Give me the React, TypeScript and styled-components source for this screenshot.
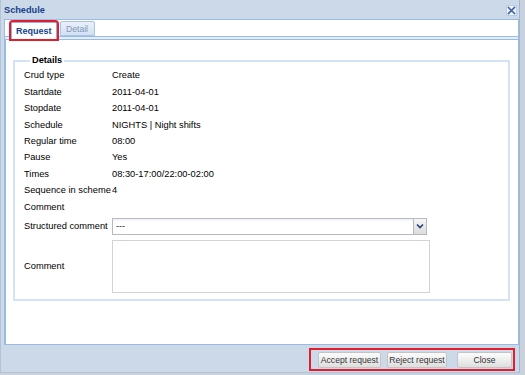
import React from "react";
import styled, { createGlobalStyle } from "styled-components";

const Global = createGlobalStyle`
  html, body { margin: 0; padding: 0; }
  body {
    width: 525px;
    height: 375px;
    overflow: hidden;
    background: #c9d2dc;
    font-family: "Liberation Sans", Arial, sans-serif;
  }
`;

const Win = styled.div`
  width: 520px;
  height: 373px;
  background: #ccd9e8;
  border-left: 1px solid #b4c4d6;
  border-right: 1px solid #9fb7d6;
  border-bottom: 1px solid #b4c4d6;
  display: flex;
  flex-direction: column;
  box-sizing: border-box;
`;

const Header = styled.div`
  height: 19px;
  display: flex;
  align-items: center;
  justify-content: space-between;
  padding: 0 2px 0 3px;
  flex-shrink: 0;
`;

const Title = styled.div`
  font-weight: bold;
  font-size: 9.2px;
  color: #15428b;
`;

const CloseBtn = styled.div`
  width: 11px;
  height: 11px;
  margin-top: 2px;
  background: #eef3fa;
  border: 1px solid #b9cce6;
  box-sizing: border-box;
  display: flex;
  align-items: center;
  justify-content: center;
`;

const Main = styled.div`
  margin: 0 0 0 3px;
  display: flex;
  flex-direction: column;
  width: 515px;
`;

const Strip = styled.div`
  height: 17px;
  background: #fff;
  border: 1px solid #99bbe8;
  border-bottom: none;
  box-sizing: border-box;
  display: flex;
  align-items: flex-end;
  padding-left: 6px;
  gap: 3px;
  position: relative;
  z-index: 1;
`;

const StripSpacer = styled.div`
  height: 3px;
  box-sizing: border-box;
  border-top: 1px solid #99bbe8;
  border-left: 1px solid #99bbe8;
  border-right: 1px solid #99bbe8;
  background: #e4eefc;
`;

const Tab = styled.div<{ $active?: boolean; $marked?: boolean }>`
  height: ${(p) => (p.$active ? "17px" : "15px")};
  margin-bottom: ${(p) => (p.$active ? "-3px" : "0")};
  box-sizing: border-box;
  padding: 0 4px;
  display: flex;
  align-items: center;
  justify-content: center;
  font-size: ${(p) => (p.$active ? "9px" : "8.6px")};
  font-weight: ${(p) => (p.$active ? "bold" : "normal")};
  color: ${(p) => (p.$active ? "#15428b" : "#8196b6")};
  background: ${(p) =>
    p.$active ? "#fff" : "linear-gradient(#e9f0fa, #d3e1f3)"};
  border: 1px solid ${(p) => (p.$active ? "#8db2e3" : "#a9c3e6")};
  border-bottom: ${(p) => (p.$active ? "none" : "1px solid #a9c3e6")};
  border-radius: 2px 2px 0 0;
  outline: ${(p) => (p.$marked ? "2px solid #e31d2a" : "none")};
  min-width: ${(p) => (p.$active ? "44px" : "35px")};
`;

const Body = styled.div`
  height: 306px;
  background: #fff;
  border: 1px solid #99bbe8;
  border-left-width: 2px;
  box-sizing: border-box;
  padding: 15px 8px 0 7px;
`;

const FieldSet = styled.fieldset`
  margin: 0;
  height: 246px;
  box-sizing: border-box;
  border: 2px solid #d3e2f7;
  padding: 0 9px 0 9px;
  width: 497px;
`;

const Legend = styled.legend`
  font-size: 9.2px;
  font-weight: bold;
  color: #000;
  padding: 0 2px;
  margin-left: 6px;
  line-height: 11px;
`;

const Rows = styled.div`
  display: flex;
  flex-direction: column;
  margin-top: 1px;
`;

const Row = styled.div`
  display: flex;
  align-items: center;
  height: 16.45px;
  font-size: 9.3px;
  color: #000;
`;

const Label = styled.div`
  width: 88px;
  flex-shrink: 0;
  white-space: nowrap;
`;

const Value = styled.div`
  white-space: nowrap;
`;

const ComboRow = styled.div`
  display: flex;
  align-items: center;
  margin-top: 3px;
  height: 17px;
  font-size: 9.3px;
  color: #000;
`;

const Combo = styled.div`
  display: flex;
  height: 17px;
  width: 315px;
  box-sizing: border-box;
`;

const ComboInput = styled.div`
  flex: 1;
  border: 1px solid #b5b8c8;
  border-right: none;
  background: linear-gradient(#f0f0f0 0px, #fff 3px);
  font-size: 9px;
  padding-left: 3px;
  display: flex;
  align-items: center;
  color: #222;
`;

const Trigger = styled.div`
  width: 14px;
  border: 1px solid #b5b8c8;
  box-sizing: border-box;
  background: linear-gradient(#f6f6f6, #dcdcdc);
  display: flex;
  align-items: center;
  justify-content: center;
`;

const AreaRow = styled.div`
  display: flex;
  align-items: center;
  margin-top: 5px;
  font-size: 9.3px;
  color: #000;
`;

const TextArea = styled.div`
  width: 318px;
  height: 53px;
  box-sizing: border-box;
  border: 1px solid #d0d3dc;
  background: #fff;
`;

const Footer = styled.div`
  flex: 1;
  display: flex;
  justify-content: flex-end;
  align-items: flex-start;
  padding-top: 3px;
  padding-right: 4px;
`;

const ButtonGroup = styled.div`
  border: 2px solid #e31d2a;
  padding: 2px 1px 1px 7px;
  display: flex;
  gap: 6px;
`;

const Btn = styled.div<{ $w: number; $gapBefore?: number }>`
  width: ${(p) => p.$w}px;
  height: 16px;
  box-sizing: border-box;
  margin-left: ${(p) => p.$gapBefore ?? 0}px;
  border: 1px solid #c4c4c4;
  border-radius: 2px;
  background: linear-gradient(#fdfdfd, #ececec 55%, #dedede);
  font-size: 8.6px;
  color: #333;
  display: flex;
  align-items: center;
  justify-content: center;
  white-space: nowrap;
`;

const rows: [string, string][] = [
  ["Crud type", "Create"],
  ["Startdate", "2011-04-01"],
  ["Stopdate", "2011-04-01"],
  ["Schedule", "NIGHTS | Night shifts"],
  ["Regular time", "08:00"],
  ["Pause", "Yes"],
  ["Times", "08:30-17:00/22:00-02:00"],
  ["Sequence in scheme", "4"],
  ["Comment", ""],
];

export default function App() {
  return (
    <>
      <Global />
      <Win>
        <Header>
          <Title>Schedule</Title>
          <CloseBtn>
            <svg width="9" height="9" viewBox="0 0 9 9">
              <path
                d="M1.5 1.5 L7.5 7.5 M7.5 1.5 L1.5 7.5"
                stroke="#3f63a8"
                strokeWidth="1.6"
                strokeLinecap="square"
              />
            </svg>
          </CloseBtn>
        </Header>
        <Main>
          <Strip>
            <Tab $active $marked>
              Request
            </Tab>
            <Tab>Detail</Tab>
          </Strip>
          <StripSpacer />
          <Body>
            <FieldSet>
              <Legend>Details</Legend>
              <Rows>
                {rows.map(([l, v]) => (
                  <Row key={l}>
                    <Label>{l}</Label>
                    <Value>{v}</Value>
                  </Row>
                ))}
              </Rows>
              <ComboRow>
                <Label>Structured comment</Label>
                <Combo>
                  <ComboInput>---</ComboInput>
                  <Trigger>
                    <svg width="8" height="6" viewBox="0 0 8 6">
                      <path
                        d="M1 1.5 L4 4.5 L7 1.5"
                        stroke="#24407a"
                        strokeWidth="1.6"
                        fill="none"
                      />
                    </svg>
                  </Trigger>
                </Combo>
              </ComboRow>
              <AreaRow>
                <Label>Comment</Label>
                <TextArea />
              </AreaRow>
            </FieldSet>
          </Body>
        </Main>
        <Footer>
          <ButtonGroup>
            <Btn $w={63}>Accept request</Btn>
            <Btn $w={60}>Reject request</Btn>
            <Btn $w={55} $gapBefore={4}>
              Close
            </Btn>
          </ButtonGroup>
        </Footer>
      </Win>
    </>
  );
}
